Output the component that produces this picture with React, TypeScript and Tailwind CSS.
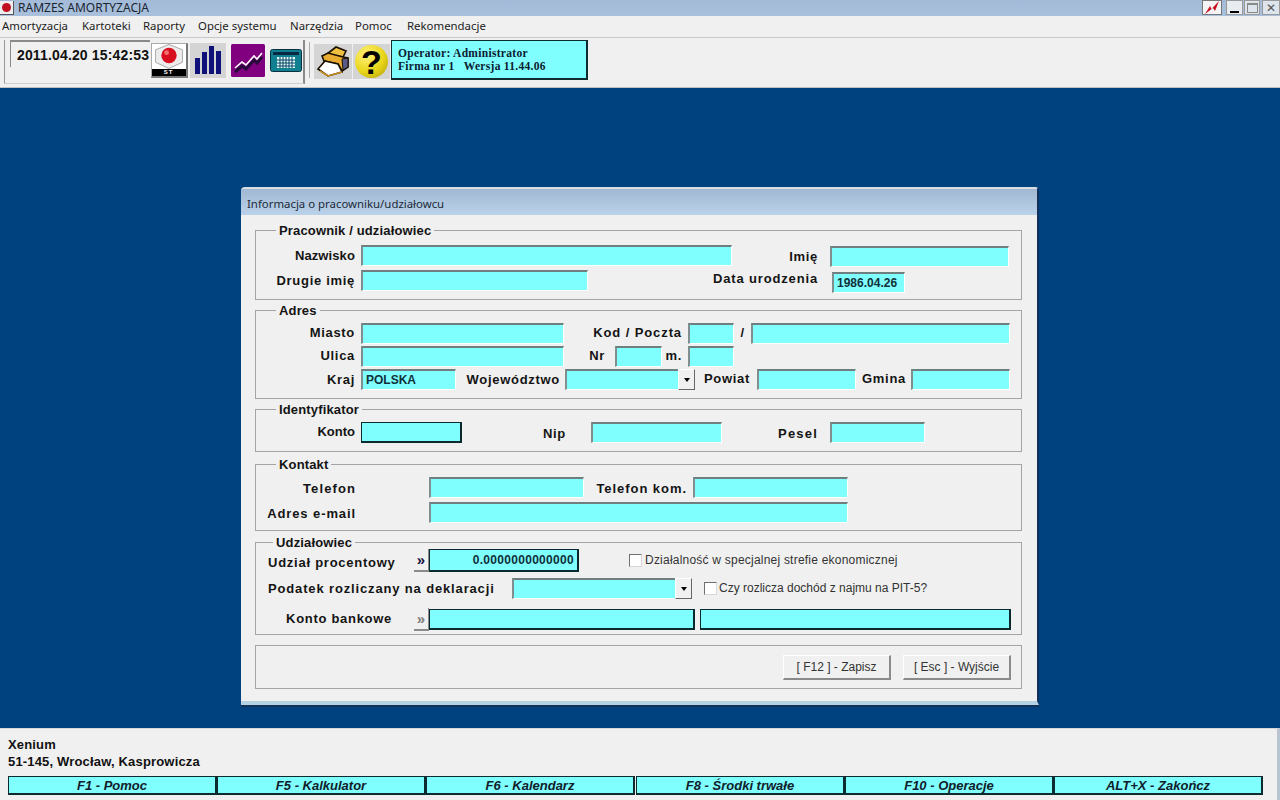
import React from "react";

const sans = "font-['Liberation_Sans',Arial,sans-serif]";

function F({ w, cls = "", dark = false, children }: { w: number; cls?: string; dark?: boolean; children?: React.ReactNode }) {
  return (
    <div
      style={{ width: w }}
      className={`h-[21px] shrink-0 bg-[#80ffff] flex items-center overflow-hidden ${
        dark
          ? "border border-r-2 border-b-2 border-[#0a2a2e]"
          : "border-t-2 border-l-2 border-r border-b border-t-[#6f7f7f] border-l-[#7f8f8f] border-r-white border-b-white"
      } ${cls}`}
    >
      {children}
    </div>
  );
}

function L({ w, cls = "", children }: { w: number; cls?: string; children: React.ReactNode }) {
  return (
    <div style={{ width: w }} className={`shrink-0 text-right text-[13px] font-bold tracking-[0.7px] leading-[21px] whitespace-nowrap text-[#141414] ${cls}`}>
      {children}
    </div>
  );
}

function Arrow() {
  return (
    <div className="absolute right-0 top-0 bottom-0 w-[17px] bg-[#f0f0f0] border border-t-white border-l-white border-r-[#666] border-b-[#666] flex items-center justify-center">
      <div className="w-0 h-0 border-l-[3px] border-r-[3px] border-t-[4px] border-l-transparent border-r-transparent border-t-black" />
    </div>
  );
}

function Group({ title, titleX, h, mt, children }: { title?: string; titleX?: number; h: number; mt: number; children: React.ReactNode }) {
  return (
    <div style={{ height: h, marginTop: mt }} className="relative w-[767px] border border-[#a4a4a4]">
      {title && (
        <div style={{ left: titleX ?? 20 }} className="absolute -top-[8px] h-[16px] bg-[#f0f0f0] px-[3px] text-[13px] font-bold tracking-[0.15px] leading-[15px] text-[#141414] whitespace-nowrap">
          {title}
        </div>
      )}
      {children}
    </div>
  );
}

function Chevron({ faded }: { faded?: boolean }) {
  return (
    <div className={`w-[15px] h-[23px] shrink-0 bg-[#f0f0f0] border-b-2 border-r border-b-[#8a8a8a] border-r-[#8a8a8a] flex items-center justify-center text-[15px] font-bold leading-none ${faded ? "text-[#7a7a7a]" : "text-[#101040]"}`}>
      »
    </div>
  );
}

function Check({ cls = "" }: { cls?: string }) {
  return <div className={`w-[13px] h-[13px] shrink-0 bg-white border border-t-[#707070] border-l-[#707070] border-r-[#d8d8d8] border-b-[#d8d8d8] ${cls}`} />;
}

function Tool({ w, children }: { w: number; children: React.ReactNode }) {
  return (
    <div style={{ width: w }} className="h-[35px] shrink-0 flex items-center justify-center">
      {children}
    </div>
  );
}

function Btn({ children, ml = 0 }: { children: React.ReactNode; ml?: number }) {
  return (
    <div style={{ marginLeft: ml }} className="w-[108px] h-[25px] shrink-0 bg-[#f0f0f0] border-t border-l border-r-2 border-b-2 border-t-white border-l-white border-r-[#8a8a8a] border-b-[#8a8a8a] flex items-center justify-center text-[12px] text-[#333]">
      {children}
    </div>
  );
}

const menu: [string, number][] = [
  ["Amortyzacja", 80],
  ["Kartoteki", 61],
  ["Raporty", 55],
  ["Opcje systemu", 92],
  ["Narzędzia", 65],
  ["Pomoc", 52],
  ["Rekomendacje", 90],
];

const keys = ["F1 - Pomoc", "F5 - Kalkulator", "F6 - Kalendarz", "F8 - Środki trwałe", "F10 - Operacje", "ALT+X - Zakończ"];

export default function App() {
  return (
    <div className={`w-[1280px] h-[800px] overflow-hidden flex flex-col bg-[#00417f] ${sans}`}>
      {/* Title bar */}
      <div className="h-4 shrink-0 flex items-center bg-gradient-to-b from-[#a3bbd8] to-[#a9c0dc]">
        <div className="w-[14px] h-[14px] flex items-center justify-center bg-[#eee] border-r border-b border-[#555]">
          <div className="w-[9px] h-[9px] rounded-full bg-[#c01020]" />
        </div>
        <span className="ml-1 text-[12px] font-['Noto_Sans',sans-serif] text-[#1a2430] leading-4">RAMZES AMORTYZACJA</span>
        <div className="ml-auto flex items-start h-[15px] self-start">
          <div className="w-5 h-[15px] bg-[#f4f4f4] border border-[#777] flex items-center justify-center">
            <svg width="16" height="13" viewBox="0 0 16 13"><path d="M1 13 L6 5 L7.5 8 L15 0 L11 10 L9 7 L5 10 Z" fill="#c81020" /></svg>
          </div>
          <div className="ml-[4px] w-[17px] h-[15px] bg-[#e8ecf0] border border-[#999] flex items-end justify-center pb-[1px]">
            <div className="w-[9px] h-[2px] bg-black" />
          </div>
          <div className="ml-[1px] w-[16px] h-[15px] bg-[#dde4ec] border border-[#999] flex items-center justify-center">
            <div className="w-[11px] h-[10px] border border-[#888] border-t-2" />
          </div>
          <div className="ml-[2px] w-[18px] h-[15px] bg-[#dde4ec] border border-[#999] flex items-center justify-center text-[12px] leading-none text-[#555]">
            ✕
          </div>
        </div>
      </div>

      {/* Menu */}
      <div className="h-[22px] shrink-0 bg-[#f0f0f0] flex items-center pl-[2px] pb-[2px] border-b border-[#c8c8c8] font-['Noto_Sans',sans-serif] text-[11.4px] text-[#1c1c1c]">
        {menu.map(([m, w]) => (
          <span key={m} style={{ width: w }} className="shrink-0 whitespace-nowrap">{m}</span>
        ))}
      </div>

      {/* Toolbar */}
      <div className="h-[50px] shrink-0 bg-[#f0f0f0] border-b border-[#c0c0c0] flex items-start pl-[4px] pt-[2px]">
        <div className="w-[301px] h-[44px] shrink-0 flex items-start border-l border-r-2 border-b border-l-[#999] border-r-[#8a8a8a] border-b-[#d0d0d0]">
          <div className="ml-[5px] w-[140px] h-[27px] shrink-0 border-t-2 border-l border-t-[#8a8a8a] border-l-[#8a8a8a] pl-[6px] text-[14px] font-bold tracking-[0.15px] leading-[27px] whitespace-nowrap text-[#111]">
            2011.04.20 15:42:53
          </div>
          <div className="flex items-center mt-[3px]">
            <Tool w={38}>
              <div className="w-[37px] h-[35px] bg-white border border-[#aaa] border-b-2 border-r-2 border-b-[#777] border-r-[#777] flex flex-col">
                <svg className="flex-1" viewBox="0 0 34 26" width="34" height="26">
                  <path d="M17 0.5 L31 6 L31 19 L17 25.5 L3 19 L3 6 Z" fill="#ececec" stroke="#a8a8a8" />
                  <circle cx="17" cy="12" r="8" fill="#d80f1e" />
                  <circle cx="14.5" cy="9" r="2.5" fill="#f87070" />
                </svg>
                <div className="h-[7px] bg-black text-white text-[6px] font-bold leading-[7px] text-center tracking-[1px]">ST</div>
              </div>
            </Tool>
            <Tool w={40}>
              <div className="w-[36px] h-[35px] bg-[#d4d4d4] flex items-end justify-center gap-[2px] pb-[4px]">
                <div className="w-[5px] h-[16px] bg-[#10107a]" />
                <div className="w-[5px] h-[22px] bg-[#10107a]" />
                <div className="w-[5px] h-[28px] bg-[#10107a]" />
                <div className="w-[5px] h-[23px] bg-[#10107a]" />
              </div>
            </Tool>
            <Tool w={38}>
              <svg width="34" height="33" viewBox="0 0 34 33" className="ml-[2px]">
                <rect width="34" height="33" rx="1.5" fill="#800080" />
                <path d="M4 25 L11 19 L15 22 L23 13 L26 16 L31 10" fill="none" stroke="#28083a" strokeWidth="3" transform="translate(0 3)" />
                <path d="M4 24 L11 18 L15 21 L23 12 L26 15 L31 9" fill="none" stroke="#fff" strokeWidth="1.6" />
              </svg>
            </Tool>
            <Tool w={38}>
              <svg width="32" height="23" viewBox="0 0 32 23" className="ml-[2px]">
                <rect x="0.5" y="0.5" width="31" height="22" rx="2" fill="#108090" stroke="#0a3040" />
                <rect x="3" y="3" width="26" height="3" fill="#062840" />
                <rect x="7" y="8" width="18" height="11" fill="#dff" />
                <path d="M7 11 H25 M7 14 H25 M7 17 H25 M10 8 V19 M13 8 V19 M16 8 V19 M19 8 V19 M22 8 V19" stroke="#0a4060" strokeWidth="1" />
              </svg>
            </Tool>
          </div>
        </div>
        <div className="ml-[4px] w-px h-[36px] mt-[2px] bg-[#a8a8a8] shrink-0" />
        <div className="flex items-center mt-[3px] ml-[3px]">
          <Tool w={39}>
            <div className="w-[38px] h-[35px] bg-[#d4d4d4] flex items-center justify-center">
              <svg width="34" height="31" viewBox="0 0 34 31">
                <path d="M11 8 L20 1 L30 5 L27 11 Z" fill="#f0c040" stroke="#1a1000" strokeWidth="1.6" />
                <path d="M6 10 L12 7 L27 11 L32 12 L32 21 L26 25 L22 18 L8 15 Z" fill="#e8ac30" stroke="#1a1000" strokeWidth="1.6" />
                <path d="M26 13 L32 12 L32 21 L27 24 Z" fill="#5a5a88" stroke="#1a1000" strokeWidth="1" />
                <path d="M9 15 L22 18 L26 26 L12 30 L2 23 Z" fill="#fff" stroke="#1a1000" strokeWidth="1.6" />
                <path d="M4 25 L12 30 L26 26" fill="none" stroke="#c89020" strokeWidth="1.6" />
              </svg>
            </div>
          </Tool>
          <Tool w={39}>
            <div className="w-[37px] h-[35px] bg-[#d4d4d4] flex items-center justify-center">
              <div className="w-[33px] h-[33px] rounded-full bg-[radial-gradient(circle_at_35%_30%,#fff27a,#e8d418_55%,#a89808)] flex items-center justify-center text-[34px] font-black text-black leading-none font-['Liberation_Sans',sans-serif]">?</div>
            </div>
          </Tool>
          <div className="w-[197px] h-[40px] -mt-[3px] shrink-0 bg-[#80ffff] border border-[#0c2c30] border-b-2 border-r-2 pl-[6px] pt-[6px] font-['Liberation_Serif',serif] font-bold text-[11.5px] leading-[13px] text-[#0b2030] tracking-[0.3px] whitespace-pre">
            {"Operator: Administrator\nFirma nr 1   Wersja 11.44.06"}
          </div>
        </div>
      </div>

      {/* Workspace */}
      <div className="flex-1 min-h-0 pt-[99px] pl-[241px]">
        <div className="w-[798px] h-[518px] flex flex-col border-t-2 border-t-[#d8dde2] border-r-2 border-r-[#12305a] bg-[#f0f0f0] rounded-t-[4px] border-b-4 border-b-[#b5d2e4] shadow-[0_2px_0_#12305a]">
          <div className="h-[26px] shrink-0 bg-gradient-to-b from-[#a2b8d2] to-[#b9d2ea] pl-[6px] pt-[4px] text-[11.4px] leading-[22px] font-['Noto_Sans',sans-serif] text-[#1c2a38]">
            Informacja o pracowniku/udziałowcu
          </div>
          <div className="flex-1 pl-[14px] bg-[#f0f0f0] text-[#141414]">
            <Group title="Pracownik / udziałowiec" h={70} mt={15}>
              <div className="flex mt-[14px]">
                <L w={99} cls="!tracking-[0.1px]">Nazwisko</L>
                <F w={371} cls="ml-[6px]" />
                <L w={86} cls="mt-[1px]">Imię</L>
                <F w={179} cls="ml-[12px] mt-[1px]" />
              </div>
              <div className="flex mt-[3px]">
                <L w={99}>Drugie imię</L>
                <F w={227} cls="ml-[6px]" />
                <L w={230} cls="-mt-[2px] !tracking-[0.85px]">Data urodzenia</L>
                <F w={73} cls="ml-[14px] mt-[2px]">
                  <span className="pl-[3px] text-[12px] font-bold text-[#10303a]">1986.04.26</span>
                </F>
              </div>
            </Group>

            <Group title="Adres" h={89} mt={10}>
              <div className="flex mt-[12px]">
                <L w={99} cls="-mt-[1px]">Miasto</L>
                <F w={203} cls="ml-[6px]" />
                <L w={118} cls="-mt-[1px] !tracking-[0.9px]">Kod / Poczta</L>
                <F w={46} cls="ml-[6px]" />
                <L w={5} cls="ml-[5px] -mt-[1px] !tracking-normal">/</L>
                <F w={259} cls="ml-[7px]" />
              </div>
              <div className="flex mt-[2px]">
                <L w={99} cls="-mt-[1px]">Ulica</L>
                <F w={203} cls="ml-[6px]" />
                <L w={41} cls="-mt-[1px]">Nr</L>
                <F w={47} cls="ml-[10px]" />
                <L w={20} cls="-mt-[1px]">m.</L>
                <F w={46} cls="ml-[6px]" />
              </div>
              <div className="flex mt-[2px]">
                <L w={99}>Kraj</L>
                <F w={95} cls="ml-[6px]">
                  <span className="pl-[3px] text-[12px] font-bold text-[#10303a]">POLSKA</span>
                </F>
                <L w={104}>Województwo</L>
                <div className="relative ml-[5px]">
                  <F w={130} />
                  <Arrow />
                </div>
                <L w={55} cls="-mt-[1px]">Powiat</L>
                <F w={99} cls="ml-[7px]" />
                <L w={50} cls="-mt-[1px]">Gmina</L>
                <F w={99} cls="ml-[5px]" />
              </div>
            </Group>

            <Group title="Identyfikator" h={43} mt={10}>
              <div className="flex mt-[12px]">
                <L w={99} cls="-mt-[1px] !tracking-[0px]">Konto</L>
                <F w={101} dark cls="ml-[6px]" />
                <L w={104} cls="mt-[1px]">Nip</L>
                <F w={131} cls="ml-[25px]" />
                <L w={96} cls="mt-[1px] !tracking-[1.2px]">Pesel</L>
                <F w={95} cls="ml-[12px]" />
              </div>
            </Group>

            <Group title="Kontakt" h={67} mt={12}>
              <div className="flex mt-[12px]">
                <L w={100} cls="mt-[1px] !tracking-[1.1px]">Telefon</L>
                <F w={155} cls="ml-[73px]" />
                <L w={103} cls="mt-[1px] !tracking-[0.95px]">Telefon kom.</L>
                <F w={155} cls="ml-[6px]" />
              </div>
              <div className="flex mt-[3px]">
                <L w={100} cls="mt-[1px] !tracking-[0.9px]">Adres e-mail</L>
                <F w={419} cls="ml-[73px]" />
              </div>
            </Group>

            <Group title="Udziałowiec" titleX={17} h={93} mt={11}>
              <div className="flex items-start mt-[6px]">
                <L w={140} cls="!text-left pl-[12px] mt-[3px] !tracking-[0.75px]">Udział procentowy</L>
                <div className="ml-[18px]"><Chevron /></div>
                <F w={150} dark cls="!h-[23px] justify-end pr-[3px]">
                  <span className="text-[12px] font-bold text-[#10303a] tracking-[0.3px]">0.0000000000000</span>
                </F>
                <Check cls="ml-[50px] mt-[5px]" />
                <span className="ml-[3px] mt-[4px] text-[12px] leading-[15px] tracking-[0.22px] text-[#333] whitespace-nowrap">Działalność w specjalnej strefie ekonomicznej</span>
              </div>
              <div className="flex items-start mt-[5px]">
                <L w={256} cls="!text-left pl-[12px] !tracking-[0.85px]">Podatek rozliczany na deklaracji</L>
                <div className="relative">
                  <F w={180} />
                  <Arrow />
                </div>
                <Check cls="ml-[12px] mt-[4px]" />
                <span className="ml-[2px] mt-[3px] text-[12px] leading-[15px] text-[#333] whitespace-nowrap">Czy rozlicza dochód z najmu na PIT-5?</span>
              </div>
              <div className="flex items-start mt-[9px]">
                <L w={136} cls="mt-[0px]">Konto bankowe</L>
                <div className="ml-[22px]"><Chevron faded /></div>
                <F w={266} dark cls="mt-[1px]" />
                <F w={311} dark cls="ml-[5px] mt-[1px]" />
              </div>
            </Group>

            <Group h={44} mt={10}>
              <div className="flex justify-end pr-[10px] pt-[9px]">
                <Btn>[ F12 ] - Zapisz</Btn>
                <Btn ml={12}>[ Esc ] - Wyjście</Btn>
              </div>
            </Group>
          </div>
        </div>
      </div>

      {/* Bottom */}
      <div className="h-[72px] shrink-0 bg-[#f0f0f0] border-t border-[#d8d8d8] border-r-[3px] border-r-[#b8c4d0] pl-2 pt-[7px]">
        <div className="text-[13px] font-bold leading-[17px] tracking-[0.15px] text-[#111] h-[17px]">Xenium</div>
        <div className="text-[13px] font-bold leading-[17px] tracking-[0.17px] text-[#111] h-[17px]">51-145, Wrocław, Kasprowicza</div>
        <div className="flex mt-[6px]">
          {keys.map((k, i) => (
            <div key={k} style={{ marginRight: i === 2 ? 1 : 0 }} className="w-[209px] h-[19px] shrink-0 bg-[#80ffff] border border-b-2 border-r-2 border-[#0c2c30] text-center text-[13px] font-bold italic leading-[17px] text-[#10202a]">
              {k}
            </div>
          ))}
        </div>
      </div>
    </div>
  );
}
